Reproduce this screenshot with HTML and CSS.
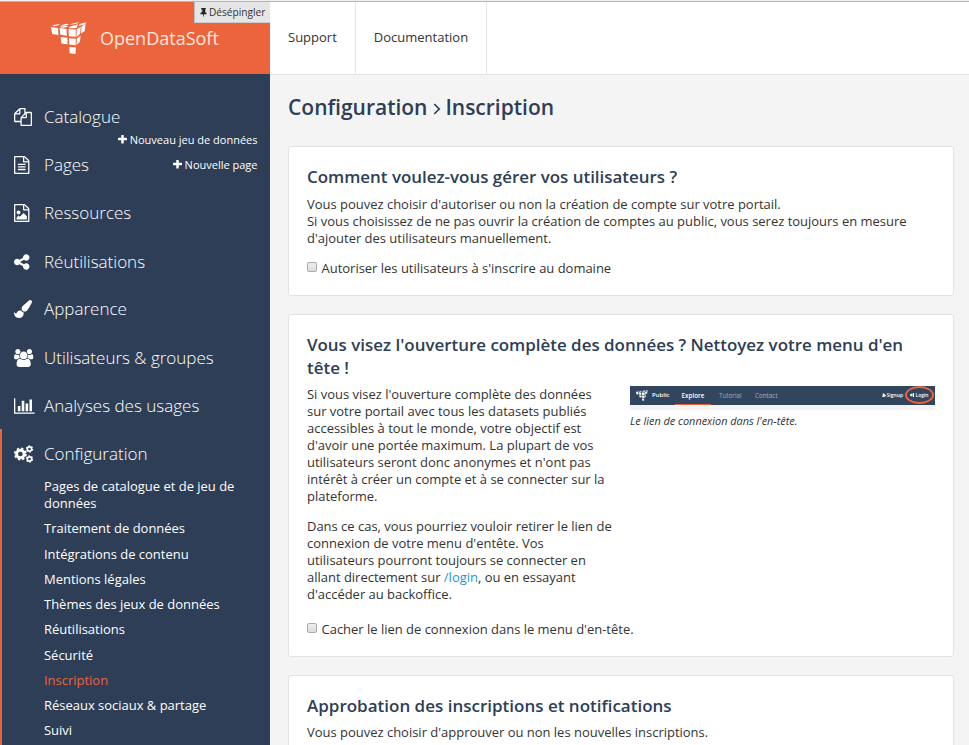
FILE: index.html
```
<!DOCTYPE html>
<html lang="fr">
<head>
<meta charset="utf-8">
<title>Configuration › Inscription</title>
<link rel="stylesheet" href="styles.css">
</head>
<body>
<svg class="defs" width="0" height="0">
  <symbol id="plus" viewBox="192 192 1408 1408"><path d="M1600 736v192q0 40-28 68t-68 28h-416v416q0 40-28 68t-68 28h-192q-40 0-68-28t-28-68v-416h-416q-40 0-68-28t-28-68v-192q0-40 28-68t68-28h416v-416q0-40 28-68t68-28h192q40 0 68 28t28 68v416h416q40 0 68 28t28 68z"/></symbol>
  <symbol id="logo" viewBox="0 0 36 32">
    <path d="M1 3.600l6-1.600 2 .8-5.500 1.500zM9.500 3.300l6-1.600 2.500.7-6 1.700zM18.500 2.300l7.500-1.900 2.500.3-6.500 1.900zM8.500 4.700l7-.9 1.500 1-6 1zM18 5l9-2.700-1.500 3.600-7 .4zM28.500 1.900l7-1.700-1.500 2-6.500 1.700z"/>
    <path d="M0 5l6.900 1 .6 7-6.300-1zM8.500 5.900l7 .8.400 7-6.500-1zM17.500 6.900l7.200.6v7.300l-6.800-.6zM9.700 15l6.600.8.300 6.400-6.200-.8zM18 16.200l6.800.5-.2 6.600-6.400-.7zM18.300 25l6.600.6-.5 6.400-5.800-.7zM25.700 7.200l4-2.500-.6 7-3.700 3.300zM30.600 4.500l3.900-2.400-.7 7-3.900 2.500zM25.800 16.700l3.800-3.200-.6 6.300-3.500 3.300z"/>
  </symbol>
</svg>
<div class="app">
  <aside class="sidebar">
    <div class="brand">
      <svg class="brand-logo"><use href="#logo"/></svg>
      <span class="brand-name">OpenDataSoft</span>
      <div class="unpin"><svg viewBox="320 128 1152 1664"><path d="M800 864v-448q0-14-9-23t-23-9-23 9-9 23v448q0 14 9 23t23 9 23-9 9-23zm672 352q0 26-19 45t-45 19h-429l-51 483q-2 12-10.500 20.500t-20.500 8.500h-1q-27 0-32-27l-76-485h-404q-26 0-45-19t-19-45q0-123 78.500-221.500t177.500-98.500v-512q-52 0-90-38t-38-90 38-90 90-38h640q52 0 90 38t38 90-38 90-90 38v512q99 0 177.500 98.500t78.500 221.500z"/></svg>Désépingler</div>
    </div>
    <nav class="nav">
      <div class="item"><svg class="ico" viewBox="0 0 2048 1792"><path d="M1696 384q40 0 68 28t28 68v1216q0 40-28 68t-68 28h-960q-40 0-68-28t-28-68v-288h-544q-40 0-68-28t-28-68v-672q0-40 20-88t48-76l408-408q28-28 76-48t88-20h416q40 0 68 28t28 68v328q68-40 128-40h416zm-544 213l-299 299h299v-299zm-640-384l-299 299h299v-299zm196 647l316-316v-416h-384v416q0 40-28 68t-68 28h-416v640h512v-256q0-40 20-88t48-76zm956 804v-1152h-384v416q0 40-28 68t-68 28h-416v640h896z"/></svg><span>Catalogue</span><a class="add add-low"><svg><use href="#plus"/></svg>Nouveau jeu de données</a></div>
      <div class="item"><svg class="ico" viewBox="128 0 2048 1792"><path d="M1596 380q28 28 48 76t20 88v1152q0 40-28 68t-68 28h-1344q-40 0-68-28t-28-68v-1600q0-40 28-68t68-28h896q40 0 88 20t76 48zm-444-244v376h376q-10-29-22-41l-313-313q-12-12-41-22zm384 1528v-1024h-416q-40 0-68-28t-28-68v-416h-768v1536h1280zm-1024-864q0-14 9-23t23-9h704q14 0 23 9t9 23v64q0 14-9 23t-23 9h-704q-14 0-23-9t-9-23v-64zm736 224q14 0 23 9t9 23v64q0 14-9 23t-23 9h-704q-14 0-23-9t-9-23v-64q0-14 9-23t23-9h704zm0 256q14 0 23 9t9 23v64q0 14-9 23t-23 9h-704q-14 0-23-9t-9-23v-64q0-14 9-23t23-9h704z"/></svg><span>Pages</span><a class="add"><svg><use href="#plus"/></svg>Nouvelle page</a></div>
      <div class="item"><svg class="ico" viewBox="128 0 2048 1792"><path d="M1596 380q28 28 48 76t20 88v1152q0 40-28 68t-68 28h-1344q-40 0-68-28t-28-68v-1600q0-40 28-68t68-28h896q40 0 88 20t76 48zm-444-244v376h376q-10-29-22-41l-313-313q-12-12-41-22zm384 1528v-1024h-416q-40 0-68-28t-28-68v-416h-768v1536h1280zm-128-448v320h-1024v-192l192-192 128 128 384-384zm-832-192q-80 0-136-56t-56-136 56-136 136-56 136 56 56 136-56 136-136 56z"/></svg><span>Ressources</span></div>
      <div class="item lowered"><svg class="ico" viewBox="128 0 2048 1792"><path d="M1344 1024q133 0 226.500 93.500t93.500 226.500-93.500 226.500-226.500 93.500-226.500-93.500-93.500-226.500q0-12 2-34l-360-180q-92 86-218 86-133 0-226.500-93.500t-93.500-226.500 93.500-226.500 226.500-93.500q126 0 218 86l360-180q-2-22-2-34 0-133 93.500-226.500t226.500-93.500 226.500 93.500 93.500 226.500-93.500 226.500-226.500 93.500q-126 0-218-86l-360 180q2 22 2 34t-2 34l360 180q92-86 218-86z"/></svg><span>Réutilisations</span></div>
      <div class="item raised"><svg class="ico" viewBox="0 0 2048 1792"><path d="M1615 0q70 0 122.500 46.500t52.500 116.500q0 63-45 151-332 629-465 752-97 91-218 91-126 0-216.500-92.500t-90.500-219.500q0-128 92-212l638-579q59-54 130-54zm-909 1034q39 76 106.500 130t150.500 76l1 71q4 213-129.500 347t-348.500 134q-123 0-218-46.500t-152.500-127.500-86.500-183-29-220q7 5 41 30t62 44.500 59 36.500 46 17q41 0 55-37 25-66 57.500-112.500t69.500-76 88-47.500 103-25.500 125-10.500z"/></svg><span>Apparence</span></div>
      <div class="item"><svg class="ico" viewBox="0 0 2048 1792"><path d="M593 896q-162 5-265 128h-134q-82 0-138-40.500t-56-118.500q0-353 124-353 6 0 43.500 21t97.500 42.500 119 21.500q67 0 133-23-5 37-5 66 0 139 81 256zm1071 637q0 120-73 189.500t-194 69.500h-874q-121 0-194-69.500t-73-189.500q0-53 3.500-103.500t14-109 26.500-108.500 43-97.500 62-81 85.500-53.500 111.500-20q10 0 43 21.500t73 48 107 48 135 21.500 135-21.500 107-48 73-48 43-21.500q61 0 111.500 20t85.500 53.500 62 81 43 97.500 26.500 108.500 14 109 3.500 103.500zm-1024-1277q0 106-75 181t-181 75-181-75-75-181 75-181 181-75 181 75 75 181zm704 384q0 159-112.500 271.500t-271.500 112.500-271.500-112.500-112.500-271.500 112.500-271.500 271.500-112.500 271.500 112.500 112.500 271.500zm576 225q0 78-56 118.500t-138 40.500h-134q-103-123-265-128 81-117 81-256 0-29-5-66 66 23 133 23 59 0 119-21.500t97.500-42.500 43.500-21q124 0 124 353zm-128-609q0 106-75 181t-181 75-181-75-75-181 75-181 181-75 181 75 75 181z"/></svg><span>Utilisateurs &amp; groupes</span></div>
      <div class="item"><svg class="ico" viewBox="0 0 2048 1792"><path d="M640 896v512h-256v-512h256zm384-512v1024h-256v-1024h256zm1024 1152v128h-2048v-1536h128v1408h1920zm-640-896v768h-256v-768h256zm384-384v1152h-256v-1152h256z"/></svg><span>Analyses des usages</span></div>
      <div class="section">
        <div class="item"><svg class="ico cogs" viewBox="0 0 20.600 18"><circle cx="6.400" cy="9" r="3.800" stroke-width="2.900"/><circle cx="6.400" cy="9" r="5.600" stroke-width="1.700" stroke-dasharray="2.400 1.998"/><circle cx="15.500" cy="4" r="2.100" stroke-width="1.600"/><circle cx="15.500" cy="4" r="3.100" stroke-width="1.100" stroke-dasharray="1.700 1.546"/><circle cx="15.500" cy="14" r="2.100" stroke-width="1.600"/><circle cx="15.500" cy="14" r="3.100" stroke-width="1.100" stroke-dasharray="1.700 1.546"/></svg><span>Configuration</span></div>
        <ul class="sub">
          <li>Pages de catalogue et de jeu de données</li>
          <li>Traitement de données</li>
          <li>Intégrations de contenu</li>
          <li>Mentions légales</li>
          <li>Thèmes des jeux de données</li>
          <li>Réutilisations</li>
          <li>Sécurité</li>
          <li class="current">Inscription</li>
          <li>Réseaux sociaux &amp; partage</li>
          <li>Suivi</li>
        </ul>
      </div>
    </nav>
  </aside>
  <div class="page">
    <header class="top"><a>Support</a><a>Documentation</a></header>
    <main>
      <h1>Configuration <svg class="chev" viewBox="0 0 8 12"><path d="M1.200 1l5 5-5 5"/></svg> Inscription</h1>
      <section class="card">
        <h2>Comment voulez-vous gérer vos utilisateurs ?</h2>
        <p>Vous pouvez choisir d'autoriser ou non la création de compte sur votre portail.<br>Si vous choisissez de ne pas ouvrir la création de comptes au public, vous serez toujours en mesure d'ajouter des utilisateurs manuellement.</p>
        <label><span class="box"></span>Autoriser les utilisateurs à s'inscrire au domaine</label>
      </section>
      <section class="card">
        <h2>Vous visez l'ouverture complète des données ? Nettoyez votre menu d'en tête !</h2>
        <div class="cols">
          <div>
            <p>Si vous visez l'ouverture complète des données sur votre portail avec tous les datasets publiés accessibles à tout le monde, votre objectif est d'avoir une portée maximum. La plupart de vos utilisateurs seront donc anonymes et n'ont pas intérêt à créer un compte et à se connecter sur la plateforme.</p>
            <p>Dans ce cas, vous pourriez vouloir retirer le lien de connexion de votre menu d'entête. Vos utilisateurs pourront toujours se connecter en allant directement sur <a class="link">/login</a>, ou en essayant d'accéder au backoffice.</p>
          </div>
          <figure>
            <div class="thumb">
              <svg class="thumb-logo"><use href="#logo"/></svg>
              <span class="t-public">Public</span><span class="t-explore">Explore</span><span class="t-tutorial">Tutorial</span><span class="t-contact">Contact</span>
              <span class="t-signup"><svg viewBox="0 0 6 5"><path d="M0 5q0-2 1.500-2.300a1.500 1.500 0 1 1 2 0q1.500.3 1.500 2.300zM4 2.500h2v1h-2z"/></svg>Signup</span>
              <span class="t-login"><svg viewBox="0 0 5 5"><path d="M0 1.700h1.500v-1.500l2 2.300-2 2.300v-1.500h-1.500zM3.500 0h1.500v5h-1.500z"/></svg>Login</span>
            </div>
            <figcaption>Le lien de connexion dans l'en-tête.</figcaption>
          </figure>
        </div>
        <label><span class="box"></span>Cacher le lien de connexion dans le menu d'en-tête.</label>
      </section>
      <section class="card tight">
        <h2>Approbation des inscriptions et notifications</h2>
        <p>Vous pouvez choisir d'approuver ou non les nouvelles inscriptions.</p>
      </section>
    </main>
  </div>
</div>
</body>
</html>
```
FILE: styles.css
```
* { box-sizing: border-box; }
html, body { height: 100%; }
body { margin: 0; overflow: hidden; font: 12.985px/17px "Open Sans", sans-serif; color: #333; background: #f4f4f4; }
.defs { position: absolute; }
.app { display: flex; height: 745px; overflow: hidden; border-top: 1px solid #f0f0f0; }
.sidebar { width: 270px; flex: none; background: #2d3e56; color: #fff; border-top: 1px solid #b5b5b5; }
.brand { position: relative; height: 72px; background: #ec643c; display: flex; align-items: center; padding-left: 51px; }
.brand-logo { width: 36px; height: 32px; fill: #fff; margin-right: 13px; }
.brand-name { font-size: 18px; line-height: 24px; color: #fbe6df; }
.unpin { position: absolute; right: 0; top: 0; width: 76px; height: 21px; background: #e6e6e6; border-left: 1px solid #bbb; border-bottom: 1px solid #ccc; font-size: 10.150px; line-height: 20px; color: #333; display: flex; align-items: center; padding-left: 5px; white-space: nowrap; }
.unpin svg { width: 7px; height: 9px; margin-right: 2px; fill: #222; }
.nav { padding-top: 18px; }
.item { height: 48.150px; display: flex; align-items: center; padding: 2px 12.500px 0 14px; position: relative; font-size: 17px; font-weight: 300; line-height: 24px; }
.raised { padding-top: 1px; }
.lowered { padding-top: 3px; }
.ico { width: 20.600px; height: 18px; fill: #fff; margin-right: 9.400px; flex: none; }
.cogs circle { fill: none; stroke: #fff; }
.add { margin: -2px 0 0 auto; font-size: 11px; line-height: 15px; font-weight: 400; display: flex; align-items: center; white-space: nowrap; }
.add svg { width: 9px; height: 9px; fill: #fff; margin-right: 2.500px; }
.add-low { position: absolute; right: 12.500px; top: 42px; }
.section { position: relative; }
.section::before { content: ""; position: absolute; left: 0; top: 0; width: 2px; height: 400px; background: #ec643c; }
.sub { margin: 0; padding: 1px 13px 0 44px; list-style: none; }
.sub li { padding-bottom: 8.250px; }
.current { color: #ec643c; }
.page { flex: 1; border-top: 1px solid #b5b5b5; }
.top { height: 73px; background: #fff; border-bottom: 1px solid #e5e5e5; display: flex; font-size: 13px; }
.top a { border-right: 1px solid #e5e5e5; padding: 0 18px; line-height: 71px; }
main { padding: 0 15px 0 18px; }
h1 { font-size: 21px; line-height: 30px; font-weight: 600; color: #2d3e56; margin: 17px 0 24px; }
.chev { width: 8px; height: 12px; fill: none; stroke: #2d3e56; stroke-width: 1.700; margin-right: -1px; }
.card { background: #fff; border: 1px solid #e3e3e3; border-radius: 3px; padding: 18px; margin-bottom: 18px; }
h2 { font-size: 16.930px; line-height: 23px; font-weight: 600; color: #2d3e56; margin: 0 0 8px; }
.tight h2 { margin-bottom: 7px; font-size: 17px; }
p { margin: 0 0 13px; }
label { display: flex; align-items: center; }
.box { width: 10px; height: 10px; border: 1px solid #aaa; border-radius: 2px; background: linear-gradient(#eee, #dcdcdc); margin: -3px 4.500px 0 0; }
.cols { display: grid; grid-template-columns: 307px 305px; gap: 16px; margin: -1px 0 5px; }
.link { color: #1f97d0; }
figure { margin: 0; }
.thumb { position: relative; height: 24px; border-bottom: 5px solid #f4f4f4; background: #31455f; color: #fff; display: flex; font-size: 6.300px; line-height: 19px; white-space: nowrap; }
.thumb-logo { width: 12px; height: 11px; fill: #fff; margin: 4px 4px 0 6px; }
.t-public { width: 23px; font-size: 6px; font-weight: 600; }
.t-explore { width: 36px; border-bottom: 1px solid #ec643c; text-align: center; font-weight: 600; }
.t-tutorial { color: #a5afbc; margin-left: 8px; width: 36px; }
.t-contact { color: #a5afbc; }
.t-signup { margin-left: auto; margin-right: 2px; font-size: 5px; font-weight: 600; }
.t-login { width: 29px; height: 18px; border: 2px solid #ec643c; border-radius: 50%; font-size: 5px; font-weight: 600; line-height: 14px; text-align: center; margin-right: 1px; }
.thumb span svg { width: 4px; height: 4px; fill: #fff; margin-right: 1px; }
figcaption { font-size: 10.900px; line-height: 15px; font-style: italic; margin-top: 3px; }
```
